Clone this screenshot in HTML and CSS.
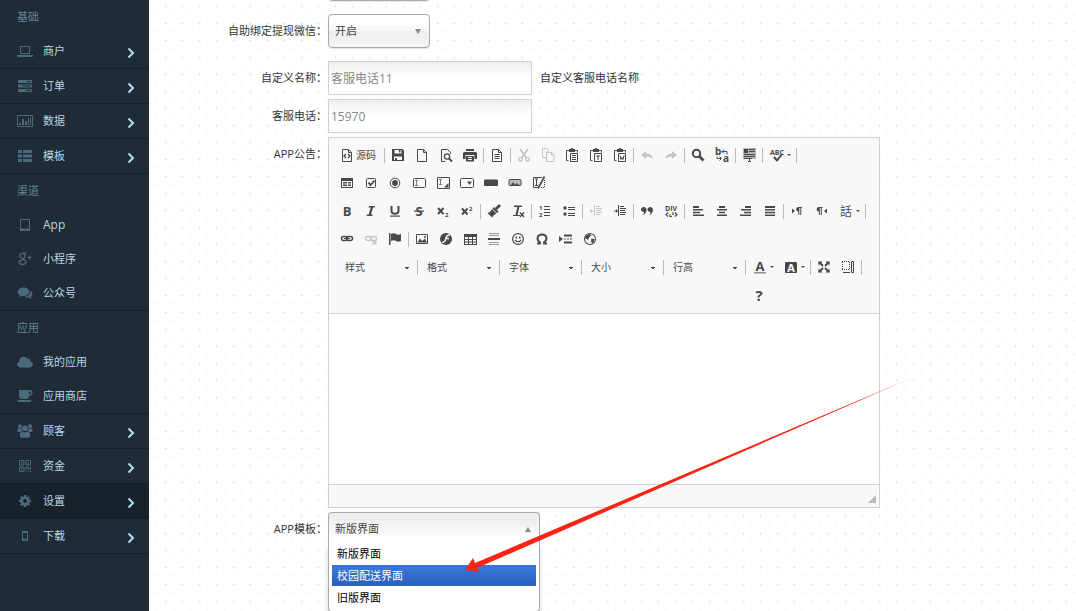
FILE: index.html
```html
<!DOCTYPE html>
<html lang="zh-CN">
<head>
<meta charset="utf-8">
<title>设置</title>
<link rel="stylesheet" href="styles.css">
</head>
<body>
<svg class="sprite" aria-hidden="true">
  <symbol id="chev" viewBox="0 0 8 12"><path d="M1.5 1.5 6 6l-4.500 4.500" fill="none" stroke="currentColor" stroke-width="2"/></symbol>
  <symbol id="caret" viewBox="0 0 4 2"><path d="M0 0h4L2 2z"/></symbol>
  <symbol id="page" viewBox="0 0 16 16"><path d="M3.500 2.500h6l3 3v9h-9zM9.500 2.500v3h3" fill="none" stroke="currentColor"/></symbol>
  <symbol id="clip" viewBox="0 0 16 16"><path d="M4.500 13.500h-2v-10h11v2M6.500 6.500h7v8h-7z" fill="none" stroke="currentColor"/><path d="M5 2h2V1h2v1h2v3H5z"/></symbol>
</svg>
<div class="app">
  <nav class="sidebar">
    <section class="group">
      <h2>基础</h2>
      <a href="#" class="item line"><svg class="nav-icon" viewBox="0 0 16 16"><path d="M3.500 3.500h9v7h-9z" fill="none" stroke="currentColor"/><path d="M0 12h16v1l-1 1H1l-1-1z"/></svg><span>商户</span><svg class="chev"><use href="#chev"/></svg></a>
      <a href="#" class="item line"><svg class="nav-icon" viewBox="0 0 16 16"><path d="M1 2h14v3H1zM1 6.500h14v3H1zM1 11h14v3H1z"/><path d="M10 3h4v1h-4zM5 7.500h9v1H5zM9 12h5v1H9z" fill="#1f2c38"/></svg><span>订单</span><svg class="chev"><use href="#chev"/></svg></a>
      <a href="#" class="item line"><svg class="nav-icon" viewBox="0 0 16 16"><path d="M.5 2.500h15v11H.5z" fill="none" stroke="currentColor"/><path d="M2 10h2v2H2zM5 6h2v6H5zM8 8h2v4H8zM11 5h1v7h-1zM13 4h1v8h-1z"/></svg><span>数据</span><svg class="chev"><use href="#chev"/></svg></a>
      <a href="#" class="item line"><svg class="nav-icon" viewBox="0 0 16 16"><path d="M1 2h4v3H1zM6 2h9v3H6zM1 6.500h4v3H1zM6 6.500h9v3H6zM1 11h4v3H1zM6 11h9v3H6z"/></svg><span>模板</span><svg class="chev"><use href="#chev"/></svg></a>
    </section>
    <section class="group line">
      <h2>渠道</h2>
      <a href="#" class="item"><svg class="nav-icon" viewBox="0 0 16 16"><path d="M4 2h8q1 0 1 1v10q0 1-1 1H4q-1 0-1-1V3q0-1 1-1zm0 1v8.500h8V3zm3.500 9.300v1h1v-1z" fill-rule="evenodd"/></svg><span class="latin">App</span></a>
      <a href="#" class="item"><svg class="nav-icon" viewBox="0 0 16 16"><path d="M9.500 2.200H6.500C1.800 2.200 2 7.600 5.800 7.400 8.800 7.200 8.500 2.800 6 2.600M6.200 7.500c0 1.300 2.800 1.300 2.800 3.500 0 3.200-7 3.200-7 .2 0-1.800 2.500-2.300 4.500-2.100M12.500 4.500v4M10.500 6.500h4" fill="none" stroke="currentColor" stroke-width="1.200"/></svg><span>小程序</span></a>
      <a href="#" class="item"><svg class="nav-icon" viewBox="0 0 16 16"><path d="M6.500 2.500c3.300 0 5.800 1.900 5.800 4.300S9.800 11 6.500 11c-.7 0-1.300 0-1.900-.2-1 .7-2 1.100-3.200 1.200.6-.6 1-1.200 1.100-2C1.400 9.200.7 8.100.7 6.800c0-2.400 2.500-4.300 5.800-4.300z"/><path d="M13.200 5.500c3 1.700 2.800 4.500.6 6 .2.800.6 1.400 1.200 2-1.300 0-2.200-.5-3.100-1.100-1.600.3-3.300 0-4.500-.7 3.700 0 6.500-2.600 5.800-6.200z"/></svg><span>公众号</span></a>
    </section>
    <section class="group line">
      <h2>应用</h2>
      <a href="#" class="item"><svg class="nav-icon" viewBox="0 0 16 16"><path d="M3.700 13.500C-.5 13.500-.8 8.500 2.300 7.400 2 2.300 8.300.8 10 4.800c1.800-1 3.600.6 3.100 2.400 3.900.8 3.600 6.300-.6 6.300z"/></svg><span>我的应用</span></a>
      <a href="#" class="item"><svg class="nav-icon" viewBox="0 0 16 16"><path d="M2 2h11q2.700.3 2.500 3T12 8c0 2-.8 3-3 3H5c-2 0-3-1-3-3zm10 1.500v3c2.600 0 2.600-3 0-3zM.5 12h14c0 1.200-.8 2-2 2h-10c-1.200 0-2-.8-2-2z" fill-rule="evenodd"/></svg><span>应用商店</span></a>
    </section>
    <section class="group">
      <a href="#" class="item line"><svg class="nav-icon" viewBox="0 0 16 16"><circle cx="3" cy="3.200" r="2"/><circle cx="13" cy="3.200" r="2"/><circle cx="8" cy="5.300" r="2.800"/><path d="M1.500 5.500h3q0 1.500 1 2.500l-2 1H1.500Q.2 9 .3 7.500q.1-1.900 1.200-2zM14.500 5.500h-3q0 1.500-1 2.500l2 1h2q1.300 0 1.200-1.500-.1-1.900-1.200-2zM5 8.500q3 1.500 6 0 2.200.6 2.200 4 0 2.200-2 2.200H4.800q-2 0-2-2.200 0-3.400 2.200-4z"/></svg><span>顾客</span><svg class="chev"><use href="#chev"/></svg></a>
      <a href="#" class="item line"><svg class="nav-icon" viewBox="0 0 16 16"><path d="M2.500 2.500h4.500v4.500H2.500zM9 2.500h4.500v4.500H9zM2.500 9h4.500v4.500H2.500zM9 13.500v-4.500h2v2h2.500v-2.500" fill="none" stroke="currentColor"/><path d="M4 4h1.500v1.500H4zM10.500 4H12v1.500h-1.500zM4 10.500h1.500V12H4zM11 13h1v1h-1zM13 12.500h1V14h-1z"/></svg><span>资金</span><svg class="chev"><use href="#chev"/></svg></a>
      <a href="#" class="item line active" aria-current="page"><svg class="nav-icon" viewBox="0 0 16 16"><circle cx="8" cy="8" r="3.200" fill="none" stroke="currentColor" stroke-width="2.600"/><path d="M8 2v2M8 12v2M2 8h2M12 8h2M3.800 3.800l1.400 1.400M10.800 10.800l1.400 1.400M12.200 3.800l-1.400 1.400M5.200 10.800l-1.400 1.400" fill="none" stroke="currentColor" stroke-width="2.600"/></svg><span>设置</span><svg class="chev"><use href="#chev"/></svg></a>
      <a href="#" class="item line"><svg class="nav-icon" viewBox="0 0 16 16"><path d="M6 3h4q1 0 1 1v8q0 1-1 1H6q-1 0-1-1V4q0-1 1-1zm0 2v5.500h4V5zm1.500 6.200v1h1v-1z" fill-rule="evenodd"/></svg><span>下载</span><svg class="chev"><use href="#chev"/></svg></a>
    </section>
  </nav>

  <main class="main">
    <form class="form">
      <div class="row"><span></span><select class="pick short" aria-label="其他"><option></option></select></div>
      <div class="row spaced"><label for="bind">自助绑定提现微信：</label>
        <div class="pick-wrap short"><select class="pick" id="bind"><option>开启</option></select><svg class="tri" viewBox="0 0 6 5"><path d="M0 0h6L3 5z"/></svg></div></div>
      <div class="row"><label for="cname">自定义名称：</label><div class="field"><input id="cname" type="text" value="客服电话11"><span>自定义客服电话名称</span></div></div>
      <div class="row"><label for="tel">客服电话：</label><div class="field"><input id="tel" type="text" value="15970"></div></div>
      <div class="row"><label for="notice">APP公告：</label>
        <div class="editor">
          <div class="toolbar" role="toolbar">
            <div class="tools">
              <button type="button" class="source"><svg viewBox="0 0 16 16"><use href="#page"/><path d="m7 7-2 2 2 2m2-4 2 2-2 2" fill="none" stroke="currentColor" stroke-width="1.300"/></svg>源码</button><i></i>
              <button type="button" aria-label="保存"><svg viewBox="0 0 16 16"><path d="M2 2h10.500L14 3.500V14H2zM4.500 3v3.500h7V3zM4 9.500V13h8V9.500z" fill-rule="evenodd"/><path d="M9 3h1.500v2.500H9zM5 11h2v2H5z"/></svg></button>
              <button type="button" aria-label="新建"><svg viewBox="0 0 16 16"><use href="#page"/></svg></button>
              <button type="button" aria-label="预览"><svg viewBox="0 0 16 16"><path d="M7 14.500H3.500v-12h6l3 3V7" fill="none" stroke="currentColor"/><circle cx="9" cy="9.500" r="2.600" fill="none" stroke="currentColor" stroke-width="1.200"/><path d="m11 11.500 3 3" stroke="currentColor" stroke-width="1.800"/></svg></button>
              <button type="button" aria-label="打印"><svg viewBox="0 0 16 16"><path d="M4 2h8v2H4zM2 5h12l1 1v6h-2.500V8h-9v4H1V6z"/><path d="M4 9h8v5.500H4zM6 10v1h4v-1zm0 2v1h4v-1z" fill-rule="evenodd"/></svg></button><i></i>
              <button type="button" aria-label="模板"><svg viewBox="0 0 16 16"><use href="#page"/><path d="M5.500 7h5v1h-5zM5.500 9h5v1h-5zM5.500 11h5v1h-5z"/></svg></button><i></i>
              <button type="button" disabled aria-label="剪切"><svg viewBox="0 0 16 16"><path d="m4 2 6.500 9M12 2l-6.500 9" stroke="currentColor" stroke-width="1.800"/><circle cx="4.500" cy="12.200" r="1.800" fill="none" stroke="currentColor" stroke-width="1.400"/><circle cx="11.500" cy="12.200" r="1.800" fill="none" stroke="currentColor" stroke-width="1.400"/></svg></button>
              <button type="button" disabled aria-label="复制"><svg viewBox="0 0 16 16"><path d="M6 10.500H2.500v-9h4l2 2V5M6.500 5.500h5l2.500 2.500v6.500H6.500zM11.500 5.500V8H14" fill="none" stroke="currentColor"/></svg></button>
              <button type="button" aria-label="粘贴"><svg viewBox="0 0 16 16"><use href="#clip"/><path d="M8 8h4v1H8zM8 10h4v1H8zM8 12h4v1H8z"/></svg></button>
              <button type="button" aria-label="粘贴为文本"><svg viewBox="0 0 16 16"><use href="#clip"/><path d="M8 8.500h4v1h-1.500V13h-1V9.500H8z"/></svg></button>
              <button type="button" aria-label="从 Word 粘贴"><svg viewBox="0 0 16 16"><use href="#clip"/><path d="m8 8.500 1 4 1-2 1 2 1-4" fill="none" stroke="currentColor"/></svg></button><i></i>
              <button type="button" disabled aria-label="撤消"><svg viewBox="0 0 16 16"><path d="m2 8 5-4v2.500q6 0 7 5.500-2-2.500-7-2.500V12z"/></svg></button>
              <button type="button" disabled aria-label="重做"><svg viewBox="0 0 16 16"><path d="M14 8 9 4v2.500q-6 0-7 5.500 2-2.500 7-2.500V12z"/></svg></button><i></i>
              <button type="button" aria-label="查找"><svg viewBox="0 0 16 16"><circle cx="6.500" cy="6.500" r="3.700" fill="none" stroke="currentColor" stroke-width="2"/><path d="m9 9 4.500 4.500" stroke="currentColor" stroke-width="2.800"/></svg></button>
              <button type="button" aria-label="替换"><svg viewBox="0 0 16 16"><text x="1" y="7.500" class="g10">b</text><text x="9" y="14.500" class="g10">a</text><path d="M8 4.500h5v3M10 2.500l-2 2 2 2M3 9.500v2h4M5.500 9.500l2 2-2 2" fill="none" stroke="currentColor"/></svg></button><i></i>
              <button type="button" aria-label="全选"><svg viewBox="0 0 16 16"><path d="M2 1h13v11H2z" fill="#b5b5b5"/><path d="M3 2h4v4H3zM8 2h6v1H8zM8 4h6v1H8zM3 7h11v1H3zM3 9h11v1H3zM3 11h8v1H3zM8 12h1v3H8zM7 14h3v1H7z"/></svg></button><i></i>
              <button type="button" class="wide" aria-label="拼写检查"><svg viewBox="0 0 16 16"><text x="8" y="7.500" class="g7 mid">ABC</text><path d="m5 10 3 3.500L13 7" fill="none" stroke="currentColor" stroke-width="2"/></svg><svg class="caret"><use href="#caret"/></svg></button><i></i>
            </div>
            <div class="tools">
              <button type="button" aria-label="表单"><svg viewBox="0 0 16 16"><path d="M2 3h12v10H2zM3 6v6h10V6z" fill-rule="evenodd"/><path d="M4 7h4v1.500H4zM4 9.500h4V11H4zM9 7h3v1.500H9zM9 9.500h3V11H9z"/></svg></button>
              <button type="button" aria-label="复选框"><svg viewBox="0 0 16 16"><rect x="3.500" y="3.500" width="9" height="9" rx="1" fill="none" stroke="currentColor"/><path d="m5.500 7.500 2 2.500 4-4.500" fill="none" stroke="currentColor" stroke-width="1.800"/></svg></button>
              <button type="button" aria-label="单选按钮"><svg viewBox="0 0 16 16"><circle cx="8" cy="8" r="4.800" fill="none" stroke="currentColor"/><circle cx="8" cy="8" r="2.900"/></svg></button>
              <button type="button" aria-label="单行文本"><svg viewBox="0 0 16 16"><rect x="2.500" y="3.500" width="12" height="9" rx="1" fill="none" stroke="currentColor"/><path d="M4 5h3v1H6v4h1v1H4v-1h1V6H4z" opacity=".7"/></svg></button>
              <button type="button" aria-label="多行文本"><svg viewBox="0 0 16 16"><path d="M2.500 2.500h12v11h-12z" fill="none" stroke="currentColor"/><path d="M4 4h3v1H6v4h1v1H4V9h1V5H4z" opacity=".7"/><path d="M13.500 8v4.500H9z"/></svg></button>
              <button type="button" aria-label="列表"><svg viewBox="0 0 16 16"><rect x="1.500" y="3.500" width="13" height="9" rx="1" fill="none" stroke="currentColor"/><path d="M8 6.500h5L10.500 10z"/></svg></button>
              <button type="button" aria-label="按钮"><svg viewBox="0 0 16 16"><rect x="1" y="4.500" width="14" height="6.500" rx="1"/></svg></button>
              <button type="button" aria-label="图像按钮"><svg viewBox="0 0 16 16"><rect x="2" y="4.500" width="12" height="6" rx="1" fill="#bbb" stroke="currentColor"/><path d="m4 10 2-3 2 3 1.500-2 2.500 2v1H4z"/></svg></button>
              <button type="button" aria-label="隐藏域"><svg viewBox="0 0 16 16"><path d="M8 12.500H2.500v-10H11M4 4h3M5.500 4v6M4 10.500h3" fill="none" stroke="currentColor"/><path d="M13.500 5v7.500H9" fill="none" stroke="currentColor" stroke-dasharray="1 1"/><path d="M13.500 1.500 7 13.500" stroke="currentColor" stroke-width="1.600"/></svg></button>
            </div>
            <div class="tools">
              <button type="button" aria-label="加粗"><svg viewBox="0 0 16 16"><text x="8" y="12.500" class="g13 mid">B</text></svg></button>
              <button type="button" aria-label="倾斜"><svg viewBox="0 0 16 16"><path d="M6 3h6l-.4 1.500H10L8 11.500h1.700L9.300 13H3.500l.4-1.500h1.800l2-7H5.600z"/></svg></button>
              <button type="button" aria-label="下划线"><svg viewBox="0 0 16 16"><path d="M4.500 3v5c0 3.500 7 3.500 7 0V3" fill="none" stroke="currentColor" stroke-width="2"/><path d="M3 12.500h10v1.200H3z"/></svg></button>
              <button type="button" aria-label="删除线"><svg viewBox="0 0 16 16"><text x="8" y="12.500" class="g13 mid">S</text><path d="M3 7.500h10v1.200H3z"/></svg></button>
              <button type="button" aria-label="下标"><svg viewBox="0 0 16 16"><path d="m3 5 5.500 6M8.500 5 3 11" stroke="currentColor" stroke-width="1.900"/><text x="10" y="14" class="g6">2</text></svg></button>
              <button type="button" aria-label="上标"><svg viewBox="0 0 16 16"><path d="m3 5.500 5.500 6M8.500 5.500 3 11.500" stroke="currentColor" stroke-width="1.900"/><text x="10" y="7.500" class="g6">2</text></svg></button><i></i>
              <button type="button" aria-label="复制格式"><svg viewBox="0 0 16 16"><path d="m14 2-4 4" stroke="currentColor" stroke-width="2.600"/><path d="m8 4 4.500 4.500L11 10 6.500 5.500zM6 6l4.500 4.500Q7 12 6 14.500L1.500 10Q5 9 6 6z"/></svg></button>
              <button type="button" aria-label="清除格式"><svg viewBox="0 0 16 16"><path d="M4 2.500h8v1.500H9.300L7.500 12H10v1H3v-1h2.500L7.300 4H4z"/><path d="m10 9.500 4 4.500m0-4.500L10 14" stroke="currentColor" stroke-width="1.300"/></svg></button><i></i>
              <button type="button" aria-label="编号列表"><svg viewBox="0 0 16 16"><text x="2" y="7" class="g6">1</text><text x="2" y="14" class="g6">2</text><path d="M7 3h6v1H7zM7 6h6v1H7zM7 9h6v1H7zM7 12h6v1H7z"/></svg></button>
              <button type="button" aria-label="项目列表"><svg viewBox="0 0 16 16"><circle cx="4" cy="5" r="1.700"/><circle cx="4" cy="11" r="1.700"/><path d="M7 4h7v1H7zM7 6h7v1H7zM7 10h7v1H7zM7 12h7v1H7z"/></svg></button><i></i>
              <button type="button" disabled aria-label="减少缩进"><svg viewBox="0 0 16 16"><path d="M8 3h4v1H8zM8 5h6v1H8zM8 7h5v1H8zM8 9h6v1H8zM8 11h4v1H8zM6 2h1v11H6zM1.500 8 4 6v1.500h2v1H4V10z"/></svg></button>
              <button type="button" aria-label="增加缩进"><svg viewBox="0 0 16 16"><path d="M8 3h4v1H8zM8 5h6v1H8zM8 7h5v1H8zM8 9h6v1H8zM8 11h5v1H8zM6 2h1v11H6zM6 8 4 6v1.500H2v1h2V10z"/></svg></button><i></i>
              <button type="button" aria-label="块引用"><svg viewBox="0 0 16 16"><path d="M2 6.500C2 3 7.500 3 7.500 6.500c0 3-1.500 5-4 5.500 1-1 1.500-1.700 1.500-3C3 9 2 8 2 6.500zM8.500 6.500C8.500 3 14 3 14 6.500c0 3-1.500 5-4 5.500 1-1 1.500-1.700 1.500-3-2 0-3-1-3-2.500z"/></svg></button>
              <button type="button" aria-label="DIV 容器"><svg viewBox="0 0 16 16"><text x="8" y="7.500" class="g7 mid">DIV</text><path d="M5 9.500 3 11.500l2 2M12 9.500l2 2-2 2M7 11.500v2.500M10 9v3M7 13.500h2" fill="none" stroke="currentColor" stroke-width="1.200"/></svg></button><i></i>
              <button type="button" aria-label="左对齐"><svg viewBox="0 0 16 16"><path d="M3 3h6v2H3zM3 6h10v1.500H3zM3 8.800h7v1.500H3zM3 11.500h11V13H3z"/></svg></button>
              <button type="button" aria-label="居中"><svg viewBox="0 0 16 16"><path d="M5 3h6v2H5zM3 6h10v1.500H3zM5 8.800h6v1.500H5zM3 11.500h10V13H3z"/></svg></button>
              <button type="button" aria-label="右对齐"><svg viewBox="0 0 16 16"><path d="M7 3h6v2H7zM3 6h10v1.500H3zM6 8.800h7v1.500H6zM2 11.500h11V13H2z"/></svg></button>
              <button type="button" aria-label="两端对齐"><svg viewBox="0 0 16 16"><path d="M3 3h10v2H3zM3 6h10v1.500H3zM3 8.800h10v1.500H3zM3 11.500h10V13H3z"/></svg></button><i></i>
              <button type="button" aria-label="从左到右"><svg viewBox="0 0 16 16"><path d="m3 5.500 3 2.500-3 2.500zM13 4v1h-.7v7h-1V5h-1v7h-1V8.500C6.500 8.500 6.500 4 9.500 4z"/></svg></button>
              <button type="button" aria-label="从右到左"><svg viewBox="0 0 16 16"><path d="M14 5.500 11 8l3 2.500zM9.500 4v1h-.7v7h-1V5h-1v7h-1V8.500C3 8.500 3 4 6 4z"/></svg></button>
              <button type="button" class="wide" aria-label="语言"><svg viewBox="0 0 16 16"><text x="2" y="13" class="g12">話</text></svg><svg class="caret"><use href="#caret"/></svg></button><i></i>
            </div>
            <div class="tools">
              <button type="button" aria-label="链接"><svg viewBox="0 0 16 16"><rect x="2.500" y="5.500" width="6" height="4" rx="2" fill="none" stroke="currentColor" stroke-width="1.500"/><rect x="7.500" y="5.500" width="6" height="4" rx="2" fill="none" stroke="currentColor" stroke-width="1.500"/><path d="M5 7h6v1H5z"/></svg></button>
              <button type="button" disabled aria-label="取消链接"><svg viewBox="0 0 16 16"><rect x="2.500" y="5.500" width="6" height="4" rx="2" fill="none" stroke="currentColor" stroke-width="1.300"/><rect x="7.500" y="5.500" width="6" height="4" rx="2" fill="none" stroke="currentColor" stroke-width="1.300"/><path d="m9.500 9.500 4 4m0-4-4 4" stroke="currentColor" stroke-width="1.400"/></svg></button>
              <button type="button" aria-label="锚点"><svg viewBox="0 0 16 16"><path d="M2 2h1.500v12H2zM4 3q3-1.500 5 0t5 0v7q-3 1.500-5 0t-5 0z"/></svg></button><i></i>
              <button type="button" aria-label="图像"><svg viewBox="0 0 16 16"><path d="M2.500 3.500h11v9h-11z" fill="none" stroke="currentColor"/><path d="m3.500 11.500 2.500-4L8 10l3-2.500 2 4z"/><circle cx="11" cy="6" r="1"/></svg></button>
              <button type="button" aria-label="Flash"><svg viewBox="0 0 16 16"><circle cx="8" cy="8" r="6"/><path d="M12 4Q8.500 4 8 7q-.5 4-4 4.500M7.500 7.500H11" fill="none" stroke="#f8f8f8" stroke-width="1.600"/></svg></button>
              <button type="button" aria-label="表格"><svg viewBox="0 0 16 16"><path d="M2 3h13v11H2zM3 6v2h3V6zm4 0v2h3V6zm4 0v2h3V6zM3 9v1.500h3V9zm4 0v1.500h3V9zm4 0v1.500h3V9zM3 11.500V13h3v-1.500zm4 0V13h3v-1.500zm4 0V13h3v-1.500z" fill-rule="evenodd"/></svg></button>
              <button type="button" aria-label="水平线"><svg viewBox="0 0 16 16"><path d="M2 7h12v2H2z"/><path d="M3 2h10v1H3zM3 4h10v1H3zM3 11h10v1H3zM3 13h10v1H3z" opacity=".55"/></svg></button>
              <button type="button" aria-label="表情"><svg viewBox="0 0 16 16"><circle cx="8" cy="8" r="5.400" fill="none" stroke="currentColor" stroke-width="1.200"/><path d="M5.500 5.500H7v2H5.500zM9 5.500h1.500v2H9z"/><path d="M5 9q3 3.500 6 0" fill="none" stroke="currentColor" stroke-width="1.200"/></svg></button>
              <button type="button" aria-label="特殊符号"><svg viewBox="0 0 16 16"><path d="M3 12.500h3v-1.200C2 8.500 3 3.500 8 3.500s6 5 2 7.800v1.200h3" fill="none" stroke="currentColor" stroke-width="1.900"/></svg></button>
              <button type="button" aria-label="分页符"><svg viewBox="0 0 16 16"><path d="m1 5 4 3-4 3zM6 3.500h8v2H6zM6 10.500h8v2H6zM6 7.500h2v1H6zM9 7.500h2v1H9zM12 7.500h2v1h-2z"/></svg></button>
              <button type="button" aria-label="IFrame"><svg viewBox="0 0 16 16"><circle cx="8" cy="8" r="5.500" fill="none" stroke="currentColor" stroke-width="1.100"/><path d="M3.500 5 7 3l2.500 1L7 6.500 6 9 3 7zM9.500 7.500l3 .5-.5 2.500-2 2-1-2.500z"/></svg></button>
            </div>
            <div class="tools top">
              <div class="tools combos">
                <select aria-label="样式"><option>样式</option></select><i></i>
                <select aria-label="格式"><option>格式</option></select><i></i>
                <select aria-label="字体"><option>字体</option></select><i></i>
                <select aria-label="大小"><option>大小</option></select><i></i>
                <select aria-label="行高"><option>行高</option></select><i></i>
              </div>
              <div>
                <div class="tools">
                  <button type="button" class="wide" aria-label="文本颜色"><svg viewBox="0 0 16 16"><text x="8" y="11.500" class="g13 mid">A</text><path d="M2 13h12v1.500H2z" opacity=".6"/></svg><svg class="caret"><use href="#caret"/></svg></button>
                  <button type="button" class="wide" aria-label="背景颜色"><svg viewBox="0 0 16 16"><rect x="2" y="3" width="12" height="11" rx="1"/><text x="8" y="12.500" class="g11 mid light">A</text></svg><svg class="caret"><use href="#caret"/></svg></button><i></i>
                  <button type="button" aria-label="全屏"><svg viewBox="0 0 16 16"><path d="M2.500 2.500h4L2.500 6.500zM13.500 2.500v4l-4-4zM2.500 13.500v-4l4 4zM13.500 13.500h-4l4-4z"/><path d="m3 3 4 4m6-4L9 7M3 13l4-4m6 4L9 9" stroke="currentColor" stroke-width="2"/></svg></button>
                  <button type="button" aria-label="显示区块"><svg viewBox="0 0 16 16"><path d="M2.500 3v7M2 2.500h8M9.500 3v7M2 10.500h8" fill="none" stroke="currentColor" stroke-dasharray="1 1"/><path d="M11.500 2.500h2v11h-2zM3 13.500h7" fill="none" stroke="currentColor"/></svg></button><i></i>
                </div>
                <div class="tools"><button type="button" aria-label="关于"><svg viewBox="0 0 16 16"><text x="8" y="14" class="g15 mid">?</text></svg></button></div>
              </div>
            </div>
          </div>
          <textarea id="notice"></textarea>
          <div class="foot"><svg viewBox="0 0 8 8"><path d="M8 0v8H0z"/></svg></div>
        </div>
      </div>
      <div class="row"><label for="tpl">APP模板：</label>
        <div class="pick-wrap open"><select class="pick" id="tpl"><option>新版界面</option></select><svg class="tri" viewBox="0 0 6 5"><path d="M0 5h6L3 0z"/></svg>
          <ul class="menu" role="listbox" aria-label="APP模板"><li role="option" aria-selected="false">新版界面</li><li role="option" aria-selected="true">校园配送界面</li><li role="option" aria-selected="false">旧版界面</li></ul>
        </div></div>
    </form>
    <svg class="pointer" viewBox="0 0 451 196" aria-hidden="true">
      <defs><linearGradient id="fade" x1="0" x2="1" y1="0" y2="0"><stop offset=".88" stop-color="#fc2315"/><stop offset="1" stop-color="#fc2315" stop-opacity=".3"/></linearGradient></defs>
      <path d="m0 195 8-12 2 5L451 1 12 193l2 4z" fill="url(#fade)"/>
    </svg>
  </main>
</div>
</body>
</html>
```
FILE: styles.css
```css
* { box-sizing: border-box; }

body {
  margin: 0;
  font: 11px/18px "Open Sans", "Noto Sans CJK SC", sans-serif;
  color: #333;
  overflow: hidden;
}

svg { fill: currentColor; }
.sprite { display: none; }

.app { display: flex; height: 100vh; overflow: hidden; }

/* Sidebar */
.sidebar {
  flex: 0 0 149px;
  background: #1f2b36;
  color: #b7d5e8;
}
.group.line, .item.line { border-bottom: 1px solid #16202a; }
.group h2 {
  margin: 0;
  padding-left: 17px;
  font-size: 11px;
  font-weight: 400;
  line-height: 34px;
  color: #648499;
}
.item {
  display: flex;
  align-items: center;
  gap: 10px;
  height: 34px;
  padding: 0 14px 0 17px;
  color: inherit;
  text-decoration: none;
}
.item.line { height: 35px; }
.item.active { background: #17222b; }
.item span { flex: 1; }
.item .latin { font-size: 12px; }
.nav-icon { width: 16px; height: 16px; color: #4c6a7e; }
.chev { width: 8px; height: 12px; margin-top: 3px; color: #b5dcf5; }

/* Settings form */
.main {
  position: relative;
  flex: 1;
  min-width: 0;
  overflow: hidden;
  background-color: #fff;
  background-image:
    conic-gradient(from 270deg at 1px 1px, #d8d8d8 25%, transparent 0),
    conic-gradient(from 270deg at 1px 1px, #eee 25%, transparent 0),
    conic-gradient(from 270deg at 1px 1px, #eee 25%, transparent 0),
    conic-gradient(from 270deg at 5px 1px, #f7f7f7 25%, transparent 0),
    conic-gradient(from 270deg at 1px 5px, #f7f7f7 25%, transparent 0),
    conic-gradient(from 270deg at 5px 1px, #f9f9f9 25%, transparent 0),
    conic-gradient(from 270deg at 1px 5px, #f9f9f9 25%, transparent 0);
  background-size: 17px 17px;
  background-position: 16px 6px, 7px 6px, 16px 14px, 14px 6px, 16px 4px, 5px 14px, 7px 12px;
}
.form { display: grid; gap: 4px; margin-top: -33px; }
.row { display: grid; grid-template-columns: 179px 1fr; }
.row.spaced { padding: 9px 0; }
.row label { text-align: right; padding-right: 1px; line-height: 34px; }

.pick {
  width: 100%;
  height: 34px;
  padding: 0 6px;
  border: 1px solid #aaa;
  border-radius: 4px;
  background: linear-gradient(#fff 20%, #f6f6f6 50%, #eee 52%, #f4f4f4);
  box-shadow: 0 1px 1px rgba(0, 0, 0, .1);
  appearance: none;
  font: inherit;
  color: #444;
}
.pick.short, .short { width: 102px; }
.pick-wrap { position: relative; }
.tri { position: absolute; right: 9px; top: 15px; width: 6px; height: 5px; color: #888; }
.open { width: 212px; }
.open .pick {
  border-bottom-color: transparent;
  background: linear-gradient(#eee 20%, #fff 80%);
  box-shadow: none;
}
.menu {
  position: absolute;
  top: 31px;
  left: 0;
  right: 0;
  display: grid;
  gap: 1px;
  margin: 0;
  padding: 0 3px 3px;
  list-style: none;
  color: #000;
  background: #fff;
  border: 1px solid #aaa;
  border-top: 0;
  border-radius: 0 0 4px 4px;
  box-shadow: 0 4px 5px rgba(0, 0, 0, .15);
}
.menu li { padding-left: 5px; line-height: 21px; }
.menu [aria-selected="true"] { color: #fff; background: linear-gradient(#3875d7 20%, #2a62bc 90%); }

.field { display: flex; align-items: center; gap: 8px; }
.field input {
  width: 204px;
  height: 34px;
  padding: 0 2px;
  border: 1px solid #d0d0d0;
  background: linear-gradient(#eee, #fff 50%);
  font: inherit;
  font-size: 12px;
  color: #888;
}

/* Rich text editor */
.editor { max-width: 552px; border: 1px solid #d1d1d1; background: #fff; }
.toolbar {
  padding: 3px 6px 4px;
  border-bottom: 1px solid #d1d1d1;
  background: #f8f8f8;
  color: #484848;
}
.tools { display: flex; align-items: center; min-height: 28px; }
.tools.top { align-items: flex-start; }
.tools i { width: 1px; height: 15px; margin: 0 1px; background: #bcbcbc; }
.tools button {
  display: flex;
  align-items: center;
  justify-content: center;
  width: 24px;
  height: 24px;
  padding: 0;
  border: 0;
  background: none;
  font: inherit;
  font-size: 10px;
  color: inherit;
}
.tools button:disabled { color: #c4c4c4; }
.tools svg { width: 16px; height: 16px; }
.tools .source { width: 48px; gap: 1px; padding-right: 3px; }
.tools .wide { width: 31px; gap: 2px; }
.tools .caret { width: 4px; height: 2px; }
.combos { padding-left: 2px; }
.combos select {
  width: 79px;
  height: 24px;
  padding: 0 8px;
  border: 0;
  appearance: none;
  background: linear-gradient(#484848, #484848) 68px 12px / 4px 1px no-repeat,
    linear-gradient(#484848, #484848) 69px 13px / 2px 1px no-repeat;
  font: inherit;
  font-size: 10px;
  color: #484848;
}
.editor textarea {
  display: block;
  width: 100%;
  height: 170px;
  border: 0;
  resize: none;
}
.foot {
  display: flex;
  justify-content: flex-end;
  align-items: flex-end;
  height: 23px;
  padding: 4px 3px;
  border-top: 1px solid #d1d1d1;
  background: #f8f8f8;
}
.foot svg { width: 8px; height: 8px; color: #bbb; }

.g6, .g7, .g10, .g11, .g12, .g13, .g15 { font-family: "Open Sans", "Noto Sans CJK SC", sans-serif; font-weight: 700; }
.g6 { font-size: 6px; }
.g7 { font-size: 7px; }
.g10 { font-size: 10px; }
.g11 { font-size: 11px; }
.g12 { font-size: 12px; font-weight: 400; }
.g13 { font-size: 13px; }
.g15 { font-size: 15px; }
.mid { text-anchor: middle; }
.light { fill: #fff; }

.pointer { position: absolute; left: 316px; top: 375px; width: 451px; height: 196px; overflow: visible; pointer-events: none; }
```
